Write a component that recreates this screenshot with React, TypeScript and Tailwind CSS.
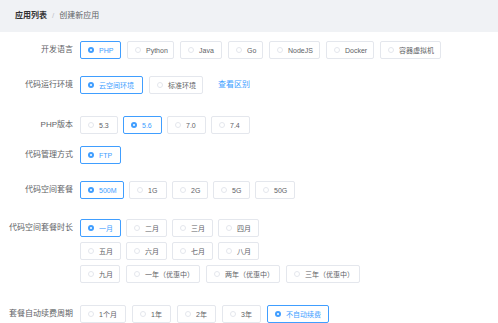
import React from 'react';

type Opt = { label: string; w: number; checked?: boolean };

const Radio: React.FC<Opt> = ({ label, w, checked }) => (
  <div
    style={{ width: w }}
    className={`flex h-[18px] items-center gap-[5px] rounded-[2px] border pl-[7px] text-[7px] leading-none ${
      checked ? 'border-[#409eff] text-[#409eff]' : 'border-[#e4e7ed] text-[#606266]'
    }`}
  >
    {checked ? (
      <span className="flex h-[6px] w-[6px] shrink-0 items-center justify-center rounded-full bg-[#409eff]">
        <span className="h-[2px] w-[2px] rounded-full bg-white" />
      </span>
    ) : (
      <span className="h-[6px] w-[6px] shrink-0 rounded-full border border-[#e4e7ed]" />
    )}
    <span className="whitespace-nowrap">{label}</span>
  </div>
);

const Row: React.FC<{ label: string; className?: string; children: React.ReactNode }> = ({
  label,
  className,
  children,
}) => (
  <div className={`flex ${className ?? ''}`}>
    <div className="flex h-[18px] w-[73px] shrink-0 items-center justify-end whitespace-nowrap text-[8px] text-[#606266]">
      {label}
    </div>
    <div className="ml-[7px]">{children}</div>
  </div>
);

export default function App() {
  return (
    <div
      className="h-[323px] w-[498px] overflow-hidden bg-white"
      style={{ fontFamily: '"Liberation Sans", "Noto Sans CJK SC", sans-serif' }}
    >
      <div className="flex h-[32px] items-center bg-[#f0f2f5] px-[15px] text-[8px]">
        <span className="font-bold text-[#303133]">应用列表</span>
        <span className="mx-[5px] text-[#c0c4cc]">/</span>
        <span className="text-[#606266]">创建新应用</span>
      </div>

      <Row label="开发语言" className="mt-[9px]">
        <div className="flex gap-[6px]">
          <Radio label="PHP" w={41} checked />
          <Radio label="Python" w={47} />
          <Radio label="Java" w={42} />
          <Radio label="Go" w={35} />
          <Radio label="NodeJS" w={51} />
          <Radio label="Docker" w={48} />
          <Radio label="容器虚拟机" w={61} />
        </div>
      </Row>

      <Row label="代码运行环境" className="mt-[17px]">
        <div className="flex items-center gap-[6px]">
          <Radio label="云空间环境" w={63} checked />
          <Radio label="标准环境" w={54} />
          <a className="ml-[9px] text-[8px] text-[#409eff]">查看区别</a>
        </div>
      </Row>

      <Row label="PHP版本" className="mt-[22px]">
        <div className="flex gap-[5px]">
          <Radio label="5.3" w={38} />
          <Radio label="5.6" w={39} checked />
          <Radio label="7.0" w={39} />
          <Radio label="7.4" w={39} />
        </div>
      </Row>

      <Row label="代码管理方式" className="mt-[12px]">
        <Radio label="FTP" w={41} checked />
      </Row>

      <Row label="代码空间套餐" className="mt-[17px]">
        <div className="flex gap-[5px]">
          <Radio label="500M" w={44} checked />
          <Radio label="1G" w={38} />
          <Radio label="2G" w={36} />
          <Radio label="5G" w={37} />
          <Radio label="50G" w={40} />
        </div>
      </Row>

      <Row label="代码空间套餐时长" className="mt-[20px]">
        <div className="flex flex-col gap-[5px]">
          <div className="flex gap-[5px]">
            <Radio label="一月" w={41} checked />
            <Radio label="二月" w={41} />
            <Radio label="三月" w={41} />
            <Radio label="四月" w={41} />
          </div>
          <div className="flex gap-[5px]">
            <Radio label="五月" w={41} />
            <Radio label="六月" w={41} />
            <Radio label="七月" w={41} />
            <Radio label="八月" w={41} />
          </div>
          <div className="flex gap-[6px]">
            <Radio label="九月" w={40} />
            <Radio label="一年（优惠中）" w={74} />
            <Radio label="两年（优惠中）" w={74} />
            <Radio label="三年（优惠中）" w={74} />
          </div>
        </div>
      </Row>

      <Row label="套餐自动续费周期" className="mt-[22px]">
        <div className="flex gap-[6px]">
          <Radio label="1个月" w={46} />
          <Radio label="1年" w={39} />
          <Radio label="2年" w={39} />
          <Radio label="3年" w={39} />
          <Radio label="不自动续费" w={62} checked />
        </div>
      </Row>
    </div>
  );
}
